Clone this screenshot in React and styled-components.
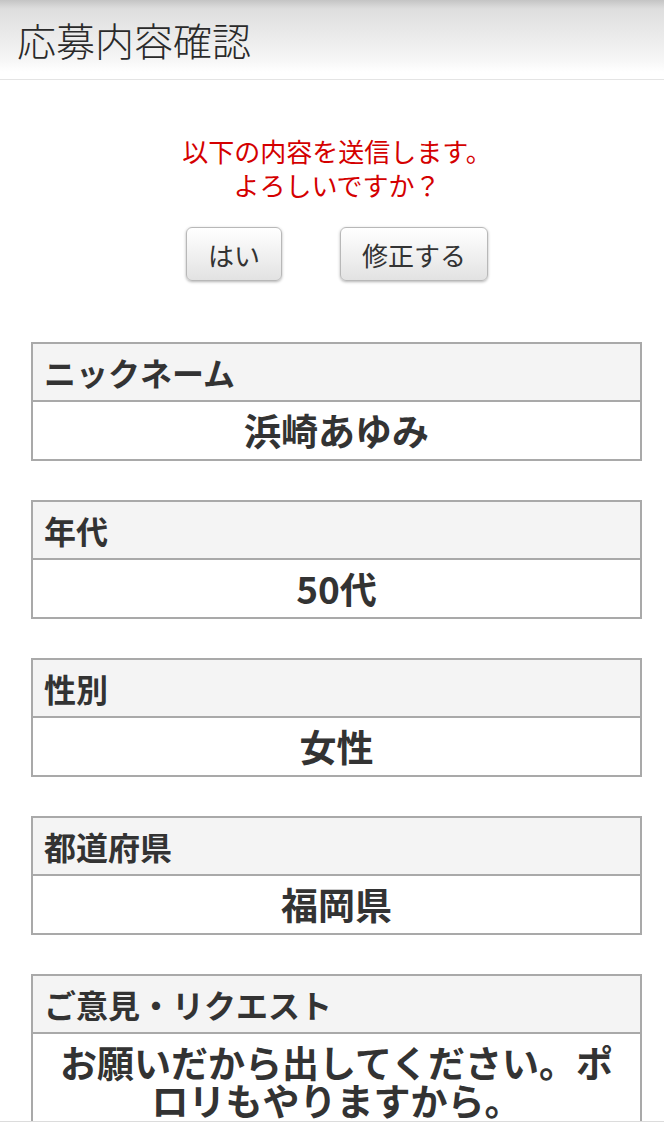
import React from "react";
import styled, { createGlobalStyle } from "styled-components";

const Global = createGlobalStyle`
  html, body { margin: 0; padding: 0; background: #fff; }
  body { font-family: "Noto Sans CJK JP", "Noto Sans", sans-serif; color: #333; }
`;

const Viewport = styled.div`
  height: 1121px;
  overflow: hidden;
  border-bottom: 1px solid #dcdcdc;
`;

const Header = styled.header`
  height: 79px;
  background: linear-gradient(#c4c4c4 0px, #d6d6d6 6px, #dedede 9px, #f6f6f6 60px, #fff 72px);
  border-bottom: 7px solid #fff;
  box-shadow: 0 1px 0 #e4e4e4;
  display: flex;
  align-items: center;
  padding: 6px 0 0 17px;
  box-sizing: border-box;
`;

const Title = styled.h1`
  margin: 0;
  font-size: 39px;
  font-weight: 300;
  color: #2a2a2a;
  line-height: 1;
  letter-spacing: 0;
`;

const Confirm = styled.section`
  padding-top: 55px;
  display: flex;
  flex-direction: column;
  align-items: center;
`;

const Message = styled.p`
  margin: 0;
  color: #d40000;
  font-size: 26px;
  line-height: 34px;
  text-align: center;
  padding-left: 10px;
`;

const Buttons = styled.div`
  display: flex;
  gap: 58px;
  margin-top: 25px;
  padding-left: 10px;
`;

const Button = styled.button`
  height: 54px;
  width: ${(p) => p.$w}px;
  border: 1px solid #b8b8b8;
  border-radius: 6px;
  background: linear-gradient(#ffffff, #f1f1f1 50%, #e2e2e2);
  box-shadow: 0 1px 3px rgba(0, 0, 0, 0.3);
  font-family: inherit;
  font-size: 26px;
  color: #333;
  padding: 0;
`;

const List = styled.div`
  margin: 61px 22px 0 31px;
  display: flex;
  flex-direction: column;
  gap: 39px;
`;

const Box = styled.dl`
  margin: 0;
  border: 2px solid #a9a9a9;
`;

const Label = styled.dt`
  background: #f4f4f4;
  border-bottom: 2px solid #a9a9a9;
  font-size: 32px;
  font-weight: 700;
  line-height: 41px;
  padding: 8px 10px 7px 11px;
  color: #333;
`;

const Value = styled.dd`
  margin: 0;
  background: #fff;
  font-size: 37px;
  font-weight: 700;
  line-height: 38px;
  padding: 9px 12px 10px;
  text-align: center;
  color: #333;
`;

const items = [
  ["ニックネーム", "浜崎あゆみ"],
  ["年代", "50代"],
  ["性別", "女性"],
  ["都道府県", "福岡県"],
  ["ご意見・リクエスト", "お願いだから出してください。ポロリもやりますから。"],
];

export default function App() {
  return (
    <>
      <Global />
      <Viewport>
        <Header>
          <Title>応募内容確認</Title>
        </Header>
        <Confirm>
          <Message>
            以下の内容を送信します。
            <br />
            よろしいですか？
          </Message>
          <Buttons>
            <Button $w={96}>はい</Button>
            <Button $w={148}>修正する</Button>
          </Buttons>
        </Confirm>
        <List>
          {items.map(([k, v]) => (
            <Box key={k}>
              <Label>{k}</Label>
              <Value>{v}</Value>
            </Box>
          ))}
        </List>
      </Viewport>
    </>
  );
}
